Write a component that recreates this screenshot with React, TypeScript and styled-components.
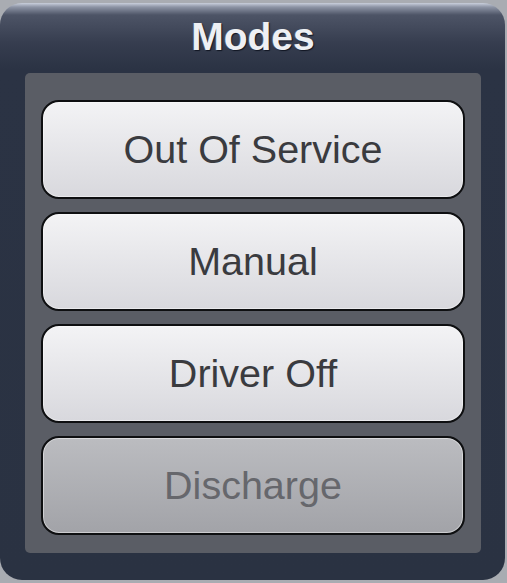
import React from 'react';
import styled, { createGlobalStyle } from 'styled-components';

interface Mode {
  id: string;
  label: string;
  disabled?: boolean;
}

const modes: Mode[] = [
  { id: 'oos', label: 'Out Of Service' },
  { id: 'manual', label: 'Manual' },
  { id: 'driver-off', label: 'Driver Off' },
  { id: 'discharge', label: 'Discharge', disabled: true }
];

const GlobalStyle = createGlobalStyle`
  html, body {
    margin: 0;
    padding: 0;
    background: #a9acb2;
  }
  body {
    font-family: 'Liberation Sans', Arial, sans-serif;
  }
`;

export default function App() {
  return (
    <>
      <GlobalStyle />
      <Page>
        <Panel>
          <Title>Modes</Title>
          <ModeList>
            {modes.map((mode) => (
              <ModeButton key={mode.id} disabled={mode.disabled}>
                {mode.label}
              </ModeButton>
            ))}
          </ModeList>
        </Panel>
      </Page>
    </>
  );
}

const Page = styled.div`
  width: 507px;
  height: 583px;
  padding-top: 3px;
  box-sizing: border-box;
`;

const Panel = styled.div`
  width: 505px;
  height: 577px;
  box-sizing: border-box;
  display: flex;
  flex-direction: column;
  padding: 0 24px 27px 25px;
  border-radius: 22px;
  background: linear-gradient(
    to bottom,
    #c9cfdc 0px,
    #8d94a5 4px,
    #4d5466 12px,
    #363d4f 40px,
    #2b3344 66px,
    #2a3242 100%
  );
`;

const Title = styled.h1`
  margin: 0;
  height: 70px;
  display: flex;
  align-items: center;
  justify-content: center;
  font-size: 39px;
  font-weight: bold;
  color: #eef0f4;
  text-shadow: 1px 1px 1px #101522, -1px 0 0 rgba(255, 255, 255, 0.15);
  padding-bottom: 2px;
  box-sizing: border-box;
`;

const ModeList = styled.div`
  flex: 1;
  display: flex;
  flex-direction: column;
  gap: 13px;
  padding: 27px 16px 17px 16px;
  background: #5a5d65;
  border-radius: 5px;
`;

const ModeButton = styled.button<{ disabled?: boolean }>`
  height: 99px;
  flex-shrink: 0;
  border: 2px solid #0e0f11;
  border-radius: 18px;
  font-family: 'Liberation Sans', Arial, sans-serif;
  font-size: 39.5px;
  color: ${(p) => (p.disabled ? '#66676c' : '#3a3b3f')};
  background: ${(p) =>
    p.disabled
      ? 'linear-gradient(to bottom, #bbbcc0, #a2a3a8)'
      : 'linear-gradient(to bottom, #f3f3f5, #d8d8dd)'};
  box-shadow: inset 0 0 0 1px rgba(255, 255, 255, 0.45);
  padding: 0;
  cursor: ${(p) => (p.disabled ? 'default' : 'pointer')};
`;
